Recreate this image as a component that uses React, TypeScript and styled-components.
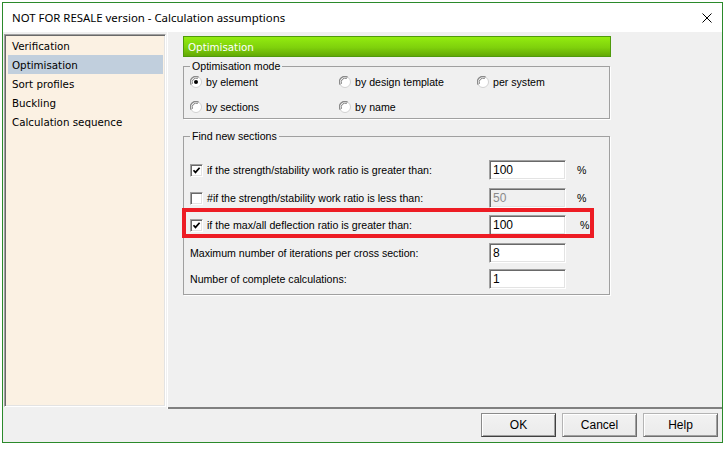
import React from "react";
import styled, { createGlobalStyle } from "styled-components";

const Global = createGlobalStyle`
  html, body { margin: 0; padding: 0; background: #ffffff; }
  * { box-sizing: border-box; }
`;

const UI = `"Liberation Sans", Arial, sans-serif`;
const TAHOMA = `"DejaVu Sans", Verdana, sans-serif`;

const Window = styled.div`
  margin: 2px 0 0 2px;
  width: 721px;
  height: 441px;
  border: 1px solid #2b8a2b;
  background: #f0f0f0;
  display: flex;
  flex-direction: column;
`;

const TitleBar = styled.div`
  height: 29px;
  flex: none;
  background: #ffffff;
  display: flex;
  align-items: center;
  justify-content: space-between;
  padding: 0 9px 1px 9px;
  font-family: "Noto Sans", "Open Sans", sans-serif;
  font-size: 11.4px;
  color: #000;
`;

const CloseBox = styled.div`
  width: 10px;
  height: 10px;
  margin-right: 1px;
  margin-top: 2px;
  display: flex;
`;

const Body = styled.div`
  flex: none;
  height: 377px;
  display: flex;
`;

const Nav = styled.ul`
  list-style: none;
  margin: 2px 0 2px 1px;
  width: 162px;
  padding: 1px 2px 0 3px;
  background: #fbf1e3;
  border: 1px solid;
  border-color: #a0a0a0 #ffffff #ffffff #a0a0a0;
  box-shadow: inset 1px 1px 0 #696969, inset -1px -1px 0 #e3e3e3;
`;

const NavItem = styled.li<{ $active?: boolean }>`
  height: 19px;
  padding-left: 4px;
  display: flex;
  align-items: center;
  font-family: ${TAHOMA};
  font-size: 10.3px;
  color: #000;
  background: ${(p) => (p.$active ? "#c1cfdd" : "transparent")};
`;

const Content = styled.section`
  flex: 1;
  margin-left: 2px;
  padding: 4px 0 0 15px;
  border-bottom: 2px solid #808080;
  box-shadow: -1px 0 0 #ffffff;
  display: flex;
  flex-direction: column;
  align-items: flex-start;
`;

const Header = styled.div`
  width: 428px;
  height: 21px;
  border: 1px solid #4f9a0c;
  background: linear-gradient(#93ec10, #7fd10c 55%, #63a905);
  color: #ffffff;
  font-family: ${TAHOMA};
  font-size: 10.3px;
  display: flex;
  align-items: center;
  padding-left: 4px;
`;

const Group = styled.fieldset<{ $mt: number; $pt: number; $pb: number }>`
  width: 427px;
  margin: ${(p) => p.$mt}px 0 0 0;
  padding: ${(p) => p.$pt}px 0 ${(p) => p.$pb}px 6px;
  border: 1px solid #a0a0a0;
  box-shadow: 1px 1px 0 #ffffff;
  min-inline-size: 0;
`;

const Legend = styled.legend`
  padding: 0 2px;
  font-family: ${UI};
  font-size: 10.6px;
  line-height: 12px;
  color: #000;
`;

const RadioGrid = styled.div`
  display: grid;
  grid-template-columns: 149px 138px 1fr;
  grid-auto-rows: 16px;
  row-gap: 9px;
`;

const RadioItem = styled.label`
  display: flex;
  align-items: center;
  gap: 4px;
  font-family: ${UI};
  font-size: 10.6px;
  color: #000;
`;

const Row = styled.div<{ $mt: number }>`
  position: relative;
  margin-top: ${(p) => p.$mt}px;
  height: 20px;
  display: grid;
  grid-template-columns: 299px 77px auto;
  align-items: center;
`;

const CheckLabel = styled.label`
  display: flex;
  align-items: center;
  gap: 4px;
  font-family: ${UI};
  font-size: 10.6px;
  color: #000;
  white-space: nowrap;
`;

const Box = styled.span`
  width: 13px;
  height: 13px;
  flex: none;
  background: #ffffff;
  border: 1px solid;
  border-color: #a0a0a0 #ffffff #ffffff #a0a0a0;
  box-shadow: inset 1px 1px 0 #696969, inset -1px -1px 0 #e3e3e3;
  display: flex;
  align-items: center;
  justify-content: center;
`;

const Field = styled.div<{ $disabled?: boolean }>`
  height: 20px;
  width: 77px;
  border: 1px solid;
  border-color: #a0a0a0 #ffffff #ffffff #a0a0a0;
  box-shadow: inset 1px 1px 0 #696969, inset -1px -1px 0 #e3e3e3;
  background: ${(p) => (p.$disabled ? "#f0f0f0" : "#ffffff")};
  color: ${(p) => (p.$disabled ? "#8a8a8a" : "#000")};
  font-family: ${UI};
  font-size: 12px;
  padding: 2px 0 0 3px;
  line-height: 15px;
`;

const Percent = styled.span<{ $shift?: number }>`
  margin-left: ${(p) => 11 + (p.$shift || 0)}px;
  font-family: ${UI};
  font-size: 10.6px;
  color: #000;
`;

const Highlight = styled.div`
  position: absolute;
  left: -8px;
  top: -7px;
  width: 412px;
  height: 30px;
  border: 4px solid #ed1c24;
  pointer-events: none;
`;

const Footer = styled.div`
  flex: 1;
  display: flex;
  justify-content: flex-end;
  align-items: flex-start;
  gap: 6px;
  padding: 4px 4px 0 0;
`;

const Button = styled.button<{ $default?: boolean }>`
  width: 75px;
  height: 24px;
  margin: 0;
  padding: 0;
  font-family: ${UI};
  font-size: 12px;
  color: #000;
  background: linear-gradient(#f2f2f2, #ebebeb);
  border: 1px solid;
  border-color: ${(p) =>
    p.$default ? "#8a8a8a #404040 #404040 #8a8a8a" : "#b4b4b4 #6e6e6e #6e6e6e #b4b4b4"};
  box-shadow: inset 1px 1px 0 #ffffff, inset -1px -1px 0 #a0a0a0;
`;

const Radio = ({ checked }: { checked?: boolean }) => (
  <svg width="12" height="12" viewBox="0 0 12 12">
    <circle cx="6" cy="6" r="5.5" fill="#ffffff" stroke="#d0d0d0" strokeWidth="1" />
    <path d="M1.2 8.6 A5.4 5.4 0 0 1 8.6 1.2" fill="none" stroke="#8a8a8a" strokeWidth="1.2" />
    <path d="M2.4 7.8 A4.2 4.2 0 0 1 7.8 2.4" fill="none" stroke="#6a6a6a" strokeWidth="0.9" />
    {checked && <circle cx="6" cy="6" r="2" fill="#000" />}
  </svg>
);

const Check = () => (
  <svg width="9" height="9" viewBox="0 0 9 9">
    <path d="M1.5 4.2 L3.5 6.4 L7.6 1.8" fill="none" stroke="#000" strokeWidth="1.7" />
  </svg>
);

export default function App() {
  return (
    <>
      <Global />
      <Window>
        <TitleBar>
          <span>NOT FOR RESALE version - Calculation assumptions</span>
          <CloseBox>
            <svg width="10" height="10" viewBox="0 0 10 10">
              <path d="M0.5 0.5 L9.5 9.5 M9.5 0.5 L0.5 9.5" stroke="#000" strokeWidth="1" />
            </svg>
          </CloseBox>
        </TitleBar>
        <Body>
          <Nav>
            <NavItem>Verification</NavItem>
            <NavItem $active>Optimisation</NavItem>
            <NavItem>Sort profiles</NavItem>
            <NavItem>Buckling</NavItem>
            <NavItem>Calculation sequence</NavItem>
          </Nav>
          <Content>
            <Header>Optimisation</Header>
            <Group $mt={3} $pt={2} $pb={3}>
              <Legend>Optimisation mode</Legend>
              <RadioGrid>
                <RadioItem>
                  <Radio checked />
                  by element
                </RadioItem>
                <RadioItem>
                  <Radio />
                  by design template
                </RadioItem>
                <RadioItem>
                  <Radio />
                  per system
                </RadioItem>
                <RadioItem>
                  <Radio />
                  by sections
                </RadioItem>
                <RadioItem>
                  <Radio />
                  by name
                </RadioItem>
              </RadioGrid>
            </Group>
            <Group $mt={11} $pt={0} $pb={5}>
              <Legend>Find new sections</Legend>
              <Row $mt={18}>
                <CheckLabel>
                  <Box>
                    <Check />
                  </Box>
                  if the strength/stability work ratio is greater than:
                </CheckLabel>
                <Field>100</Field>
                <Percent>%</Percent>
              </Row>
              <Row $mt={8}>
                <CheckLabel>
                  <Box />
                  #if the strength/stability work ratio is less than:
                </CheckLabel>
                <Field $disabled>50</Field>
                <Percent>%</Percent>
              </Row>
              <Row $mt={7}>
                <Highlight />
                <CheckLabel>
                  <Box>
                    <Check />
                  </Box>
                  if the max/all deflection ratio is greater than:
                </CheckLabel>
                <Field>100</Field>
                <Percent $shift={3}>%</Percent>
              </Row>
              <Row $mt={8}>
                <CheckLabel>Maximum number of iterations per cross section:</CheckLabel>
                <Field>8</Field>
              </Row>
              <Row $mt={6}>
                <CheckLabel>Number of complete calculations:</CheckLabel>
                <Field>1</Field>
              </Row>
            </Group>
          </Content>
        </Body>
        <Footer>
          <Button $default>OK</Button>
          <Button>Cancel</Button>
          <Button>Help</Button>
        </Footer>
      </Window>
    </>
  );
}
